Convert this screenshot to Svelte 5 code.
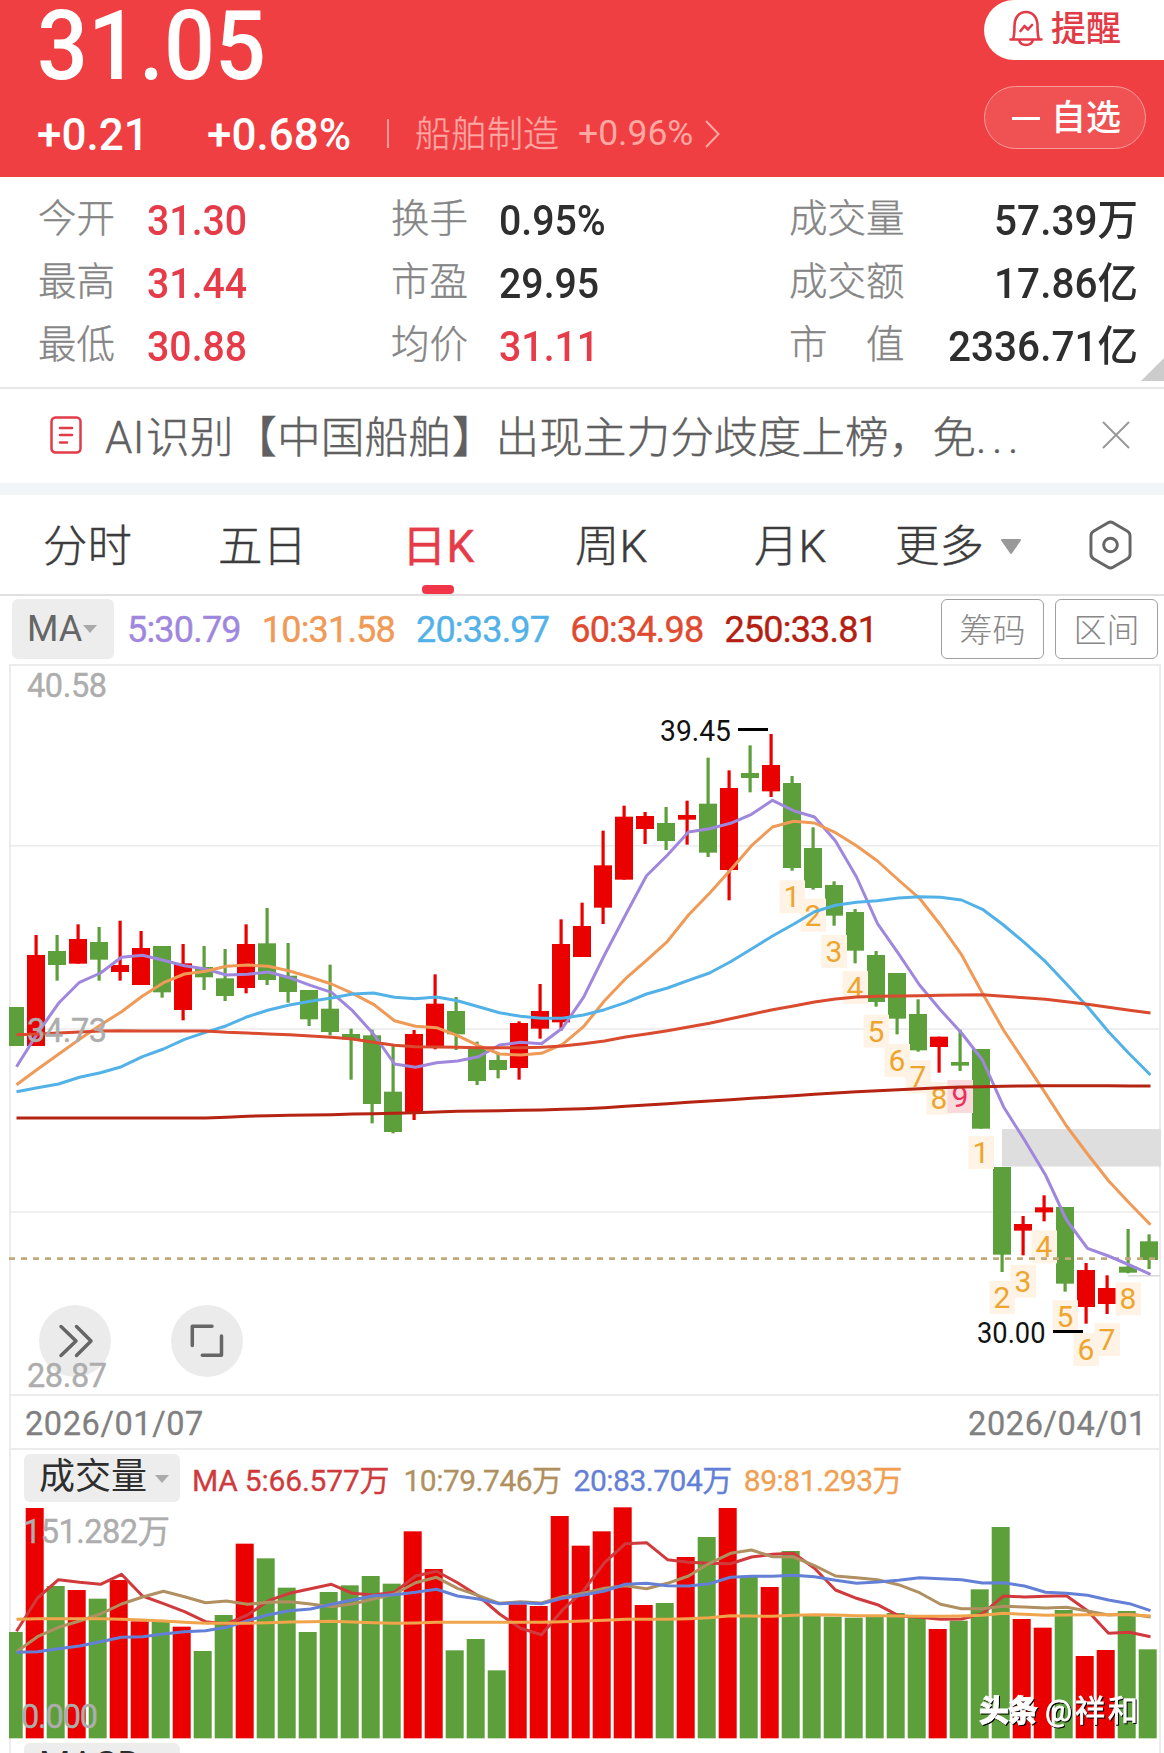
<script>
    const stats = [
        { label: '今开', value: '31.30', up: true },
        { label: '换手', value: '0.95%' },
        { label: '成交量', value: '57.39万' },
        { label: '最高', value: '31.44', up: true },
        { label: '市盈', value: '29.95' },
        { label: '成交额', value: '17.86亿' },
        { label: '最低', value: '30.88', up: true },
        { label: '均价', value: '31.11', up: true },
        { label: '市　值', value: '2336.71亿' }
    ];

    const tabs = ['分时', '五日', '日K', '周K', '月K'];
    let active = '日K';

    // [color, high, body top, body bottom, low, volume top], 3 units per pixel
    const days = [
        ['g', 1041, 1041, 1158, 1158, 576],
        ['r', 825, 885, 1158, 1158, 204],
        ['g', 825, 873, 915, 962, 438],
        ['r', 793, 837, 911, 911, 450],
        ['g', 801, 846, 899, 962, 476],
        ['r', 782, 915, 936, 962, 420],
        ['r', 813, 864, 975, 975, 544],
        ['g', 858, 858, 997, 1013, 544],
        ['r', 852, 910, 1050, 1081, 560],
        ['g', 858, 921, 952, 990, 633],
        ['g', 867, 955, 1008, 1023, 525],
        ['r', 793, 852, 984, 1000, 311],
        ['g', 744, 850, 960, 975, 355],
        ['g', 849, 947, 996, 1028, 443],
        ['g', 990, 990, 1078, 1098, 576],
        ['g', 914, 1046, 1116, 1126, 456],
        ['g', 1106, 1122, 1138, 1259, 436],
        ['g', 1109, 1126, 1332, 1390, 408],
        ['g', 1158, 1295, 1416, 1420, 431],
        ['r', 1110, 1122, 1357, 1380, 274],
        ['r', 943, 1031, 1158, 1168, 387],
        ['g', 1011, 1053, 1123, 1170, 631],
        ['g', 1145, 1164, 1263, 1275, 597],
        ['g', 1180, 1200, 1230, 1255, 691],
        ['r', 1084, 1089, 1224, 1259, 493],
        ['r', 972, 1053, 1106, 1136, 498],
        ['r', 778, 852, 1087, 1112, 228],
        ['r', 728, 798, 891, 891, 317],
        ['r', 512, 616, 743, 792, 274],
        ['r', 437, 470, 659, 659, 202],
        ['r', 456, 468, 507, 552, 495],
        ['g', 441, 489, 543, 570, 489],
        ['r', 422, 465, 479, 554, 351],
        ['g', 293, 431, 578, 591, 291],
        ['r', 331, 384, 630, 721, 204],
        ['g', 256, 339, 354, 397, 409],
        ['r', 222, 315, 394, 411, 441],
        ['g', 348, 369, 624, 632, 333],
        ['g', 502, 564, 684, 689, 528],
        ['g', 664, 675, 767, 797, 530],
        ['g', 747, 756, 872, 910, 533],
        ['g', 873, 885, 1026, 1040, 528],
        ['g', 939, 939, 1076, 1123, 519],
        ['g', 1018, 1062, 1171, 1175, 533],
        ['r', 1130, 1130, 1161, 1238, 567],
        ['g', 1109, 1206, 1217, 1233, 542],
        ['g', 1167, 1167, 1406, 1406, 448],
        ['g', 1521, 1521, 1784, 1836, 261],
        ['r', 1668, 1692, 1712, 1786, 537],
        ['r', 1606, 1642, 1657, 1684, 563],
        ['g', 1641, 1641, 1871, 1895, 510],
        ['r', 1809, 1830, 1941, 1991, 648],
        ['r', 1846, 1884, 1932, 1962, 630],
        ['g', 1707, 1820, 1838, 1840, 513],
        ['g', 1723, 1744, 1800, 1827, 628]
    ];
    const fill = { r: '#eb0000', g: '#5d9f3b' };

    const ma5 = [1220, 1120, 1030, 967, 939, 892, 886, 901, 917, 927, 945, 943, 936, 953, 976, 997, 1052, 1122, 1212, 1222, 1208, 1203, 1190, 1155, 1147, 1151, 1104, 1012, 885, 765, 647, 585, 516, 506, 490, 463, 421, 452, 471, 543, 651, 791, 881, 975, 1050, 1119, 1200, 1340, 1440, 1545, 1680, 1765, 1788, 1815, 1843];
    const ma10 = [1274, 1228, 1183, 1138, 1095, 1055, 1008, 968, 942, 934, 919, 915, 919, 933, 952, 972, 1000, 1033, 1082, 1099, 1103, 1127, 1157, 1182, 1185, 1180, 1153, 1100, 1022, 956, 901, 844, 765, 700, 630, 557, 501, 484, 489, 518, 557, 603, 660, 715, 795, 884, 1000, 1110, 1205, 1300, 1398, 1482, 1562, 1630, 1694];
    const ma20 = [1295, 1283, 1272, 1252, 1238, 1220, 1190, 1167, 1138, 1117, 1097, 1070, 1050, 1035, 1024, 1014, 1002, 999, 1012, 1016, 1011, 1022, 1040, 1058, 1069, 1075, 1075, 1065, 1049, 1028, 1002, 984, 961, 939, 905, 867, 828, 793, 755, 736, 727, 722, 714, 710, 712, 720, 748, 795, 848, 905, 972, 1040, 1115, 1182, 1245];
    const ma60 = [1124, 1122, 1119, 1116, 1113, 1112, 1113, 1113, 1113, 1113, 1117, 1119, 1122, 1124, 1128, 1132, 1137, 1147, 1156, 1160, 1161, 1162, 1163, 1163, 1163, 1162, 1158, 1151, 1143, 1131, 1122, 1112, 1101, 1090, 1076, 1063, 1049, 1038, 1026, 1017, 1011, 1009, 1008, 1007, 1006, 1005, 1004, 1009, 1013, 1018, 1025, 1033, 1042, 1051, 1059];
    const ma250 = [1374, 1374, 1374, 1374, 1374, 1374, 1374, 1374, 1374, 1374, 1372, 1369, 1367, 1366, 1365, 1364, 1362, 1361, 1360, 1358, 1356, 1354, 1353, 1352, 1351, 1350, 1348, 1346, 1343, 1339, 1335, 1331, 1327, 1323, 1319, 1315, 1311, 1307, 1303, 1299, 1295, 1292, 1289, 1286, 1283, 1281, 1280, 1279, 1278, 1277, 1277, 1277, 1277, 1278, 1278];

    const vol5 = [574, 474, 419, 427, 433, 403, 468, 491, 515, 545, 552, 525, 482, 460, 446, 433, 460, 465, 457, 408, 394, 428, 468, 522, 565, 584, 510, 452, 368, 311, 308, 359, 367, 370, 371, 351, 343, 340, 385, 450, 475, 494, 527, 532, 538, 537, 521, 468, 471, 469, 467, 512, 580, 577, 590];
    const vol10 = [635, 590, 562, 543, 522, 492, 471, 454, 470, 488, 483, 493, 487, 485, 492, 500, 492, 477, 462, 428, 412, 445, 467, 490, 485, 489, 470, 460, 445, 437, 446, 430, 408, 370, 340, 330, 350, 351, 377, 408, 413, 419, 434, 458, 493, 506, 506, 499, 501, 504, 502, 513, 525, 522, 531];
    const vol20 = [637, 635, 626, 618, 605, 592, 590, 582, 575, 572, 562, 542, 524, 512, 507, 493, 480, 467, 464, 457, 448, 468, 477, 491, 488, 491, 475, 465, 453, 433, 430, 437, 438, 431, 412, 409, 409, 406, 410, 421, 430, 426, 421, 413, 416, 419, 429, 428, 438, 457, 460, 466, 480, 491, 512];
    const vol89 = [538, 536, 536, 536, 536, 538, 540, 543, 547, 550, 550, 550, 548, 546, 545, 544, 546, 548, 550, 549, 547, 547, 547, 547, 547, 547, 545, 543, 541, 538, 538, 538, 536, 533, 527, 528, 529, 526, 524, 525, 527, 527, 528, 529, 529, 528, 526, 520, 523, 526, 525, 524, 524, 524, 528];

    const priceLines = [
        [ma5, '#9f87dd'],
        [ma10, '#f09a58'],
        [ma20, '#52b2e8'],
        [ma60, '#d94a2e'],
        [ma250, '#b52412']
    ];
    const volumeLines = [
        [vol5, '#d03a3c'],
        [vol10, '#b09060'],
        [vol20, '#6480d6'],
        [vol89, '#f0a44c']
    ];

    // sequence counters under the candles: [day, digit, baseline]
    const counts = [
        [37, 1, 742], [38, 2, 797], [39, 3, 906], [40, 4, 1014], [41, 5, 1145],
        [42, 6, 1233], [43, 7, 1282], [44, 8, 1346], [45, 9, 1341],
        [46, 1, 1509], [47, 2, 1944], [48, 3, 1895], [49, 4, 1792], [50, 5, 2002],
        [51, 6, 2100], [52, 7, 2070], [53, 8, 1948]
    ];

    function points(values) {
        return values.map((v, i) => `${16.5 + i * 21},${(v / 3).toFixed(1)}`).join(' ');
    }
</script>

<div class="page">
    <header>
        <div class="quote">
            <div class="price">31.05</div>
            <div class="change">
                <span class="diff">+0.21</span>
                <span class="pct">+0.68%</span>
                <i></i>
                <span class="sector">船舶制造</span>
                <span class="sector-pct">+0.96%</span>
                <svg width="18" height="30" viewBox="0 0 18 30"><path d="M2 2l12.500 13-12.500 13" fill="none" stroke="#ffa8a4" stroke-width="2" /></svg>
            </div>
        </div>
        <div class="actions">
            <button class="remind">
                <svg width="36" height="38" viewBox="0 0 36 38" fill="none" stroke="#e23b48" stroke-width="2.600" stroke-linecap="round" stroke-linejoin="round">
                    <path d="M2.500 30.500h31M5 30.500c1.500-4 1.500-8 1.500-14C6.500 8 11.500 3 18 3s11.500 5 11.500 13.500c0 6 0 10 1.500 14M11 31c1 3.500 4 5 7 5s6-1.500 7-5M12.500 22l4-5 3.500 3.500 4-4.500" />
                </svg>
                提醒
            </button>
            <button class="fav"><b></b>自选</button>
        </div>
    </header>

    <section class="stats">
        {#each stats as s}
            <span class="label">{s.label}</span>
            <span class="value" class:up={s.up}>{s.value}</span>
        {/each}
        <em></em>
    </section>

    <section class="notice">
        <svg width="32" height="38" viewBox="0 0 32 38" fill="none" stroke="#e23b48" stroke-width="2.500" stroke-linecap="round">
            <rect x="1.500" y="1.500" width="29" height="35" rx="4" />
            <path d="M10 12h12M10 19h12M10 26.500h7" />
        </svg>
        <p><b>AI</b>识别【中国船舶】出现主力分歧度上榜，免<span>...</span></p>
        <svg width="28" height="28" viewBox="0 0 28 28"><path d="M1 1l26 26M27 1L1 27" stroke="#999" stroke-width="2" /></svg>
    </section>

    <nav>
        {#each tabs as tab}
            <button class:active={tab == active} on:click={() => (active = tab)}>{tab}</button>
        {/each}
        <button class="more">更多
            <svg width="22" height="16" viewBox="0 0 22 16"><path d="M2 1h18l-9 13z" fill="#999" stroke="#999" stroke-width="2" stroke-linejoin="round" /></svg>
        </button>
        <svg class="gear" width="43" height="50" viewBox="0 0 44 52" preserveAspectRatio="none" fill="none" stroke="#666" stroke-width="3" stroke-linejoin="round">
            <path d="M19.500 2.800q2.500-1.500 5 0l14.500 8.700q3 1.700 3 5v19q0 3.300-3 5l-14.500 8.700q-2.500 1.500-5 0L5 40.500q-3-1.700-3-5v-19q0-3.300 3-5z" />
            <circle cx="22" cy="26" r="7" />
        </svg>
    </nav>

    <section class="ma">
        <button class="pick">MA<u></u></button>
        <span style:color="#9f87dd">5:30.79</span>
        <span style:color="#f09a58">10:31.58</span>
        <span style:color="#52b2e8">20:33.97</span>
        <span style:color="#e04a30">60:34.98</span>
        <span style:color="#b51e12">250:33.81</span>
        <button class="box">筹码</button>
        <button class="box">区间</button>
    </section>

    <div class="frame">
        <svg class="chart" width="1164" height="728" viewBox="0 6 1164 728">
            <defs><clipPath id="plot"><rect x="9" y="0" width="1152" height="800" /></clipPath></defs>
            {#each [185, 368.200, 551.200] as y}
                <rect x="11" {y} width="1149" height="1.600" fill="#ececec" />
            {/each}
            <circle cx="75" cy="681" r="36" fill="#ebebeb" />
            <circle cx="207" cy="681" r="36" fill="#ebebeb" />
            <path class="tool" d="M61 666.500l15 14.500L61 695.500M76.500 666.500l14.500 14.500L76.500 695.500" />
            <path class="tool" d="M192.300 685.500v-19.200H212M202.300 695.300h19.200V676" />

            <rect x="1002" y="469" width="159" height="37.500" fill="#dedede" />
            <rect x="1128" y="615" width="32" height="1.500" fill="#d8d8d8" />
            <g clip-path="url(#plot)">
                {#each days as [c, high, top, bottom, low], i}
                    <rect x={13.500 + i * 21} y={high / 3} width="3.200" height={(low - high) / 3} fill={fill[c]} />
                    <rect x={6 + i * 21} y={top / 3} width="18" height={(bottom - top) / 3} fill={fill[c]} />
                {/each}
            </g>
            {#each counts as [i, n, y]}
                <rect x={2.500 + i * 21} y={y / 3 - 27} width="25.500" height="33" fill={n == 9 ? '#fadadd' : '#fff3e6'} />
                <text x={15 + i * 21} y={y / 3} class="count" fill={n == 9 ? '#e8305a' : '#eda52e'}>{n}</text>
            {/each}
            <line x1="9" x2="1160" y1="598.700" y2="598.700" stroke="#c2aa7c" stroke-width="2.800" stroke-dasharray="6 6" />
            {#each priceLines as [values, color]}
                <polyline points={points(values)} stroke={color} />
            {/each}

            <text class="mark" x="660" y="81" textLength="71" lengthAdjust="spacingAndGlyphs">39.45</text>
            <rect x="738" y="68" width="30" height="3" />
            <text class="mark" x="977" y="683" textLength="68.500" lengthAdjust="spacingAndGlyphs">30.00</text>
            <rect x="1053" y="670" width="30" height="3" />
            <text class="axis" x="27" y="37" textLength="80">40.58</text>
            <text class="axis" x="27" y="381.500" textLength="80">34.73</text>
            <text class="axis" x="27" y="727.300" textLength="80">28.87</text>
        </svg>
        <div class="dates"><span>2026/01/07</span><span>2026/04/01</span></div>
        <div class="volume-head">
            <button class="pick">成交量<u></u></button>
            <span style:color="#d03a3c">MA 5:66.577万</span>
            <span style:color="#b09060">10:79.746万</span>
            <span style:color="#6480d6">20:83.704万</span>
            <span style:color="#f0a050">89:81.293万</span>
        </div>
        <svg class="chart" width="1164" height="233" viewBox="0 66 1164 233">
            {#each days as [c, , , , , top], i}
                <rect x={i ? 4.700 + i * 21 : 9} y={top / 3} width={i ? 18 : 13.700} height={(895 - top) / 3} fill={fill[c]} />
            {/each}
            {#each volumeLines as [values, color]}
                <polyline points={points(values)} stroke={color} />
            {/each}
            <text class="axis" x="23" y="102.700" textLength="147">151.282万</text>
            <text class="axis" x="21" y="287.700" textLength="77">0.000</text>
            <g class="watermark">
                <text x="979" y="281" font-weight="900" textLength="59">头条</text>
                <text x="1045" y="281" textLength="93">@祥和</text>
            </g>
        </svg>
        <button class="pick next">MACD<u></u></button>
    </div>
</div>

<style>
    :global(body) { background: #fff; }
    .page {
        width: 1164px;
        height: 1753px;
        overflow: hidden;
        font-family: Roboto, "Noto Sans CJK SC", sans-serif;
        color: #2e2e2e;
    }
    button {
        border: 0;
        padding: 0;
        background: none;
        font: inherit;
        color: inherit;
    }
    svg { flex: none; }

    header {
        height: 177px;
        display: flex;
        justify-content: space-between;
        background: #ef3f42;
        color: #fff;
        overflow: hidden;
    }
    .quote { padding-left: 37px; }
    .price {
        height: 92px;
        line-height: 92px;
        font-size: 96.5px;
        font-weight: 500;
        white-space: nowrap;
        transform: scaleX(.93);
        transform-origin: left;
    }
    .change {
        height: 86px;
        display: flex;
        align-items: center;
        font-size: 44px;
        font-weight: 500;
    }
    .diff { width: 170px; }
    .pct { width: 180px; }
    .change i { width: 2px; height: 29px; margin-bottom: 4px; background: #f89b98; }
    .sector {
        width: 163px;
        margin: 0 0 8px 26px;
        font-size: 36px;
        font-weight: 300;
        color: #ffa8a4;
        -webkit-text-stroke: .3px;
    }
    .sector-pct { width: 126px; margin-bottom: 4px; font-size: 35.5px; font-weight: 400; color: #ffa8a4; }
    .change svg { margin-bottom: 3px; }
    .actions { width: 180px; }
    .actions button {
        display: flex;
        align-items: center;
        font-size: 35px;
        font-weight: 500;
        line-height: 60px;
    }
    .remind {
        width: 180px;
        height: 60px;
        padding-left: 24px;
        gap: 7px;
        border-radius: 30px 0 0 30px;
        background: #fff;
        color: #e23b48;
    }
    .remind svg { margin-top: -4px; }
    .actions .fav {
        width: 162px;
        height: 63px;
        margin-top: 26px;
        padding: 2px 0 0 27px;
        gap: 11px;
        line-height: 63px;
        border: 1.5px solid #f99c9c;
        border-radius: 32px;
        background: #f05153;
        color: #fff;
    }
    .fav b { width: 28px; height: 3px; background: #fff; }

    .stats {
        position: relative;
        height: 212px;
        box-sizing: border-box;
        padding: 10px 26px 0 38px;
        display: grid;
        grid-template-columns: 109px 244px 108px 290px 115px 1fr;
        grid-auto-rows: 63px;
        line-height: 63px;
        border-bottom: 2px solid #e8e8e8;
    }
    .label {
        font-size: 38.5px;
        font-weight: 300;
        color: #858585;
        white-space: nowrap;
        -webkit-text-stroke: .35px;
    }
    .value {
        padding-top: 2px;
        font-size: 42px;
        font-weight: 500;
        transform: scaleX(.935);
        transform-origin: left;
    }
    .value:nth-child(6n) {
        text-align: right;
        transform: scaleX(.965);
        transform-origin: right;
    }
    .up { color: #e63c49; }
    .stats em {
        position: absolute;
        right: 0;
        bottom: 6px;
        border-left: 23px solid transparent;
        border-bottom: 23px solid #ccc;
    }

    .notice {
        height: 94px;
        padding: 0 34px 0 50px;
        display: flex;
        align-items: center;
        border-bottom: 12px solid #f2f5f7;
    }
    .notice svg { margin-bottom: 2px; }
    .notice p {
        flex: 1;
        margin: 0 0 4px 23px;
        font-size: 43.7px;
        font-weight: 300;
        color: #606060;
        white-space: nowrap;
        -webkit-text-stroke: .4px;
    }
    .notice b { margin-right: 1px; font-weight: 300; letter-spacing: .5px; }
    .notice span { letter-spacing: 5.5px; }

    nav {
        height: 99px;
        padding-left: 43px;
        display: grid;
        grid-template-columns: 175px 184px 173px 179px 141px 194px 1fr;
        align-items: center;
        font-size: 44.4px;
        border-bottom: 2px solid #e0e0e0;
    }
    nav button {
        height: 99px;
        padding-bottom: 4px;
        text-align: left;
        color: #3c3c3c;
        font-weight: 300;
        -webkit-text-stroke: .4px;
    }
    .active {
        display: grid;
        align-items: center;
        position: relative;
        color: #e63c49;
        font-weight: 400;
    }
    .active::after {
        content: "";
        position: absolute;
        left: 20px;
        bottom: 0;
        width: 32px;
        height: 9px;
        border-radius: 4px;
        background: #f03648;
    }
    .more svg { margin-left: 5px; vertical-align: 7px; }

    .ma {
        height: 68px;
        padding: 0 6px 2px 12px;
        box-sizing: border-box;
        display: flex;
        align-items: center;
        font-size: 36px;
    }
    .pick {
        display: flex;
        align-items: center;
        background: #ededed;
        border-radius: 6px;
    }
    .pick u {
        flex: none;
        border: 7.5px solid transparent;
        border-top: 8px solid #aaa;
        border-bottom: 0;
    }
    .ma .pick { width: 102px; height: 60px; padding-left: 15px; margin-right: 13px; gap: 1px; color: #666; }
    .ma span {
        margin-right: 21px;
        padding-top: 1px;
        letter-spacing: -.8px;
        -webkit-text-stroke: .4px;
    }
    .box {
        width: 103px;
        height: 60px;
        padding-bottom: 2px;
        border: 1.5px solid #a0a0a0;
        border-radius: 6px;
        font-size: 33px;
        font-weight: 300;
        color: #888;
    }
    .box:nth-last-child(2) { margin: 0 11px 0 auto; }

    .frame {
        margin: 0 3px 0 9px;
        border: 2px solid #ececec;
        border-bottom: 0;
    }
    .chart { display: block; margin-left: -11px; }
    .chart polyline { fill: none; stroke-width: 3; stroke-linejoin: round; }
    .tool { fill: none; stroke: #666; stroke-width: 3.5; stroke-linecap: round; stroke-linejoin: round; }
    .count { font-size: 30px; text-anchor: middle; }
    .mark { font-size: 30px; fill: #111; }
    .axis { font-size: 32.5px; fill: #adadad; stroke: #adadad; stroke-width: .4px; }
    .watermark { font-size: 30px; fill: #fff; stroke: #fff; stroke-width: .8px; filter: drop-shadow(1.5px 1.5px 0 #000); }

    .dates {
        height: 56px;
        padding: 3px 12px 0 14px;
        box-sizing: border-box;
        display: flex;
        justify-content: space-between;
        align-items: center;
        border-top: 2px solid #ececec;
        border-bottom: 2px solid #ececec;
        font-size: 32.5px;
        color: #808080;
        letter-spacing: .6px;
        -webkit-text-stroke: .3px;
    }
    .volume-head {
        height: 56px;
        padding-left: 13px;
        display: flex;
        align-items: center;
        font-size: 30px;
    }
    .volume-head .pick {
        width: 156px;
        height: 48px;
        padding: 0 0 2px 15px;
        margin-right: 12px;
        gap: 8px;
        font-size: 36px;
        line-height: 44px;
        box-sizing: border-box;
    }
    .volume-head .pick u { margin-top: 4px; }
    .volume-head span { margin-right: 12px; letter-spacing: -.5px; -webkit-text-stroke: .3px; }
    .volume-head span:nth-child(2) { margin-right: 14px; letter-spacing: -.2px; }
    .next { width: 156px; height: 48px; margin: 4px 0 0 13px; padding: 0 0 4px 15px; font-size: 36px; }
</style>
